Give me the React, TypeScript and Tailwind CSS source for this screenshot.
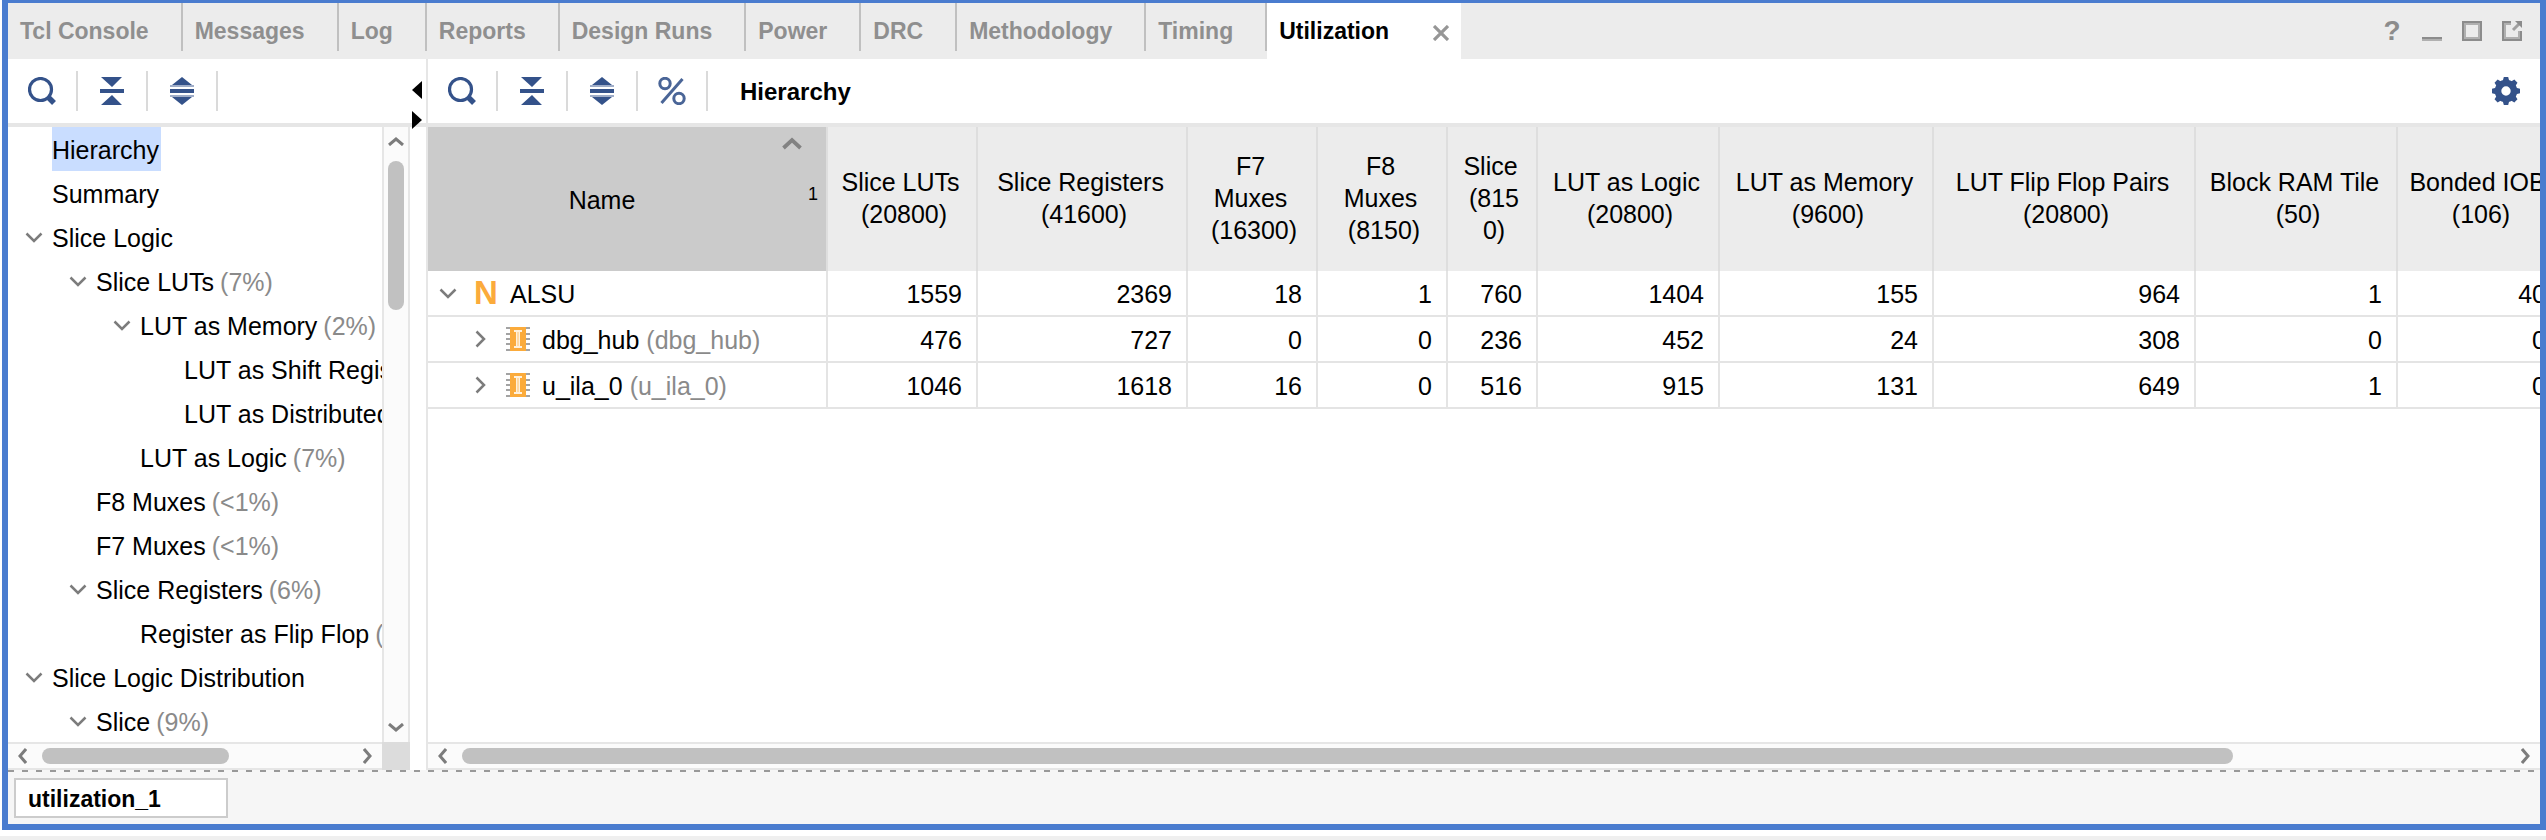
import React from "react";

const tabs = ["Tcl Console", "Messages", "Log", "Reports", "Design Runs", "Power", "DRC", "Methodology", "Timing"];

type TreeItem = { label: string; pct?: string; level: number; open?: boolean; selected?: boolean };

const tree: TreeItem[] = [
  { label: "Hierarchy", level: 0, selected: true },
  { label: "Summary", level: 0 },
  { label: "Slice Logic", level: 0, open: true },
  { label: "Slice LUTs", pct: "(7%)", level: 1, open: true },
  { label: "LUT as Memory", pct: "(2%)", level: 2, open: true },
  { label: "LUT as Shift Register", pct: "(2%)", level: 3 },
  { label: "LUT as Distributed RAM", pct: "(<1%)", level: 3 },
  { label: "LUT as Logic", pct: "(7%)", level: 2 },
  { label: "F8 Muxes", pct: "(<1%)", level: 1 },
  { label: "F7 Muxes", pct: "(<1%)", level: 1 },
  { label: "Slice Registers", pct: "(6%)", level: 1, open: true },
  { label: "Register as Flip Flop", pct: "(6%)", level: 2 },
  { label: "Slice Logic Distribution", level: 0, open: true },
  { label: "Slice", pct: "(9%)", level: 1, open: true },
];

const indents = ["pl-[10px]", "pl-[54px]", "pl-[98px]", "pl-[142px]"];

const columns = [
  { title: "Slice LUTs \n(20800)", width: "w-[150px]" },
  { title: "Slice Registers \n(41600)", width: "w-[210px]" },
  { title: "F7 \nMuxes \n(16300)", width: "w-[130px]" },
  { title: "F8 \nMuxes \n(8150)", width: "w-[130px]" },
  { title: "Slice \n(815\n0)", width: "w-[90px]" },
  { title: "LUT as Logic \n(20800)", width: "w-[182px]" },
  { title: "LUT as Memory \n(9600)", width: "w-[214px]" },
  { title: "LUT Flip Flop Pairs \n(20800)", width: "w-[262px]" },
  { title: "Block RAM Tile \n(50)", width: "w-[202px]" },
  { title: "Bonded IOB \n(106)", width: "w-[164px]" },
];

type Row = { name: string; module?: string; top?: boolean; values: number[] };

const rows: Row[] = [
  { name: "ALSU", top: true, values: [1559, 2369, 18, 1, 760, 1404, 155, 964, 1, 40] },
  { name: "dbg_hub", module: "(dbg_hub)", values: [476, 727, 0, 0, 236, 452, 24, 308, 0, 0] },
  { name: "u_ila_0", module: "(u_ila_0)", values: [1046, 1618, 16, 0, 516, 915, 131, 649, 1, 0] },
];

const chevrons = {
  down: { w: 18, h: 11, d: "M1.5 1.5 L9 9 L16.5 1.5" },
  right: { w: 11, h: 18, d: "M1.5 1.5 L9 9 L1.5 16.5" },
  scrollUp: { w: 16, h: 9, d: "M1 8 L8 2 L15 8" },
  scrollDown: { w: 16, h: 9, d: "M1 1 L8 7 L15 1" },
  scrollLeft: { w: 9, h: 16, d: "M8 1 L2 8 L8 15" },
  scrollRight: { w: 9, h: 16, d: "M1 1 L7 8 L1 15" },
  sort: { w: 20, h: 13, d: "M1.5 11 L10 3 L18.5 11" },
};

function Chevron({ kind, weight = 2.5, color = "#7c7c7c" }: { kind: keyof typeof chevrons; weight?: number; color?: string }) {
  const c = chevrons[kind];
  return (
    <svg width={c.w} height={c.h} viewBox={`0 0 ${c.w} ${c.h}`} fill="none" stroke={color} strokeWidth={weight} aria-hidden="true">
      <path d={c.d} />
    </svg>
  );
}

function SearchIcon() {
  return (
    <svg width="28" height="28" viewBox="0 0 28 28" fill="none" stroke="#34528a" aria-hidden="true">
      <circle cx="12.5" cy="12.5" r="11" strokeWidth="3.2" />
      <path d="M19.5 19.5 L26 26" strokeWidth="5.5" />
    </svg>
  );
}

function CollapseIcon() {
  return (
    <svg width="24" height="28" viewBox="0 0 24 28" fill="#34528a" aria-hidden="true">
      <path d="M1 0 H22 L12 10 Z M0 12 H24 V16 H0 Z M12 18 L22 28 H1 Z" />
    </svg>
  );
}

function ExpandIcon() {
  return (
    <svg width="24" height="28" viewBox="0 0 24 28" fill="#34528a" aria-hidden="true">
      <path d="M12 0 L22 8 H2 Z M0 12 H24 V16 H0 Z M2 20 H22 L12 28 Z" />
      <path d="M0 8 H24 V10 H0 Z M0 18 H24 V20 H0 Z" fill="#9fadc8" />
    </svg>
  );
}

function PercentIcon() {
  return (
    <svg width="28" height="28" viewBox="0 0 28 28" fill="none" stroke="#4a6597" strokeWidth="3" aria-hidden="true">
      <circle cx="7" cy="6.5" r="5.2" />
      <circle cx="21" cy="21.5" r="5.2" />
      <path d="M3.5 26 L24.5 2" />
    </svg>
  );
}

function GearIcon() {
  return (
    <svg width="28" height="28" viewBox="0 0 28 28" aria-hidden="true">
      <circle cx="14" cy="14" r="8" fill="none" stroke="#34528a" strokeWidth="6.6" />
      {[0, 45, 90, 135, 180, 225, 270, 315].map((a) => (
        <path key={a} d="M11.8 0 H16.2 L17.5 5 H10.5 Z" fill="#34528a" transform={`rotate(${a} 14 14)`} />
      ))}
    </svg>
  );
}

function InstanceIcon() {
  return (
    <svg width="24" height="24" viewBox="0 0 24 24" aria-hidden="true">
      <path d="M0 1 H24 M0 7 H24 M0 12 H24 M0 17 H24 M0 23 H24" stroke="#a3a3a3" strokeWidth="2" />
      <rect x="4" width="16" height="24" fill="#fbab3b" />
      <path d="M8 3 H16 V5 H14 V19 H16 V21 H8 V19 H10 V5 H8 Z" fill="#fff1dc" />
      <rect x="11" y="5" width="2" height="14" fill="#fdd9a5" />
    </svg>
  );
}

function ToolButton({ label, children }: { label: string; children: React.ReactNode }) {
  return (
    <div className="flex h-10 w-[70px] shrink-0 border-r-2 border-[#dadada]">
      <button type="button" aria-label={label} className="flex flex-1 items-center justify-center">
        {children}
      </button>
    </div>
  );
}

function HorizontalScroll({ thumb }: { thumb: string }) {
  return (
    <div className="flex h-7 shrink-0 items-center border-y-2 border-[#e6e6e6] bg-[#fbfbfb]">
      <button type="button" aria-label="Scroll left" className="flex h-6 w-[34px] items-center pl-[10px]">
        <Chevron kind="scrollLeft" weight={3} />
      </button>
      <div className="flex-1">
        <div className={`h-4 rounded-full bg-[#c1c1c1] ${thumb}`} />
      </div>
      <button type="button" aria-label="Scroll right" className="flex h-6 w-[34px] items-center justify-end pr-[10px]">
        <Chevron kind="scrollRight" weight={3} />
      </button>
    </div>
  );
}

function TabBar() {
  return (
    <div className="flex h-14 shrink-0 items-start bg-[#ececec] text-[23px] leading-6 font-bold">
      <div role="tablist" className="flex">
        {tabs.map((t) => (
          <button
            key={t}
            type="button"
            role="tab"
            aria-selected="false"
            className="flex h-12 items-start border-r-2 border-[#c0c0c0] pt-4 pr-8 pl-3 whitespace-nowrap text-[#8f8f8f]"
          >
            {t}
          </button>
        ))}
        <div className="flex h-14 w-[194px] items-start justify-between bg-white pt-4 pr-3 pl-3">
          <button type="button" role="tab" aria-selected="true" className="text-black">
            Utilization
          </button>
          <button type="button" aria-label="Close Utilization" className="mt-1.5">
            <svg width="16" height="16" viewBox="0 0 16 16" stroke="#969696" strokeWidth="3.2" aria-hidden="true">
              <path d="M1 1 L15 15 M15 1 L1 15" />
            </svg>
          </button>
        </div>
      </div>
      <div className="ml-auto flex h-14 gap-5 pt-[18px] pr-[18px]">
        <button type="button" aria-label="Help" className="h-5 w-5 text-center text-[28px] leading-5 text-[#8c8c8c]">
          ?
        </button>
        <button type="button" aria-label="Minimize" className="flex h-5 w-5 items-end">
          <span className="h-1 w-5 border-t-2 border-[#8c8c8c] bg-[#b0b0b0]" />
        </button>
        <button type="button" aria-label="Maximize" className="h-5 w-5">
          <svg width="20" height="20" viewBox="0 0 20 20" fill="none" aria-hidden="true">
            <rect x="3" y="3" width="14" height="14" stroke="#b0b0b0" strokeWidth="2" />
            <rect x="1" y="1" width="18" height="18" stroke="#8c8c8c" strokeWidth="2" />
          </svg>
        </button>
        <button type="button" aria-label="Float" className="h-5 w-5">
          <svg width="20" height="20" viewBox="0 0 20 20" fill="none" aria-hidden="true">
            <path d="M9 3 H3 V17 H17 V10" stroke="#b0b0b0" strokeWidth="2" />
            <path d="M9 1 H1 V19 H19 V10" stroke="#8c8c8c" strokeWidth="2" />
            <path d="M11 9 L17 3" stroke="#a0a0a0" strokeWidth="3" />
            <path d="M13 0 H20 V7 Z" fill="#8c8c8c" />
          </svg>
        </button>
      </div>
    </div>
  );
}

function Sidebar() {
  return (
    <aside className="relative flex w-[420px] shrink-0 flex-col border-r-2 border-[#e6e6e6] bg-white">
      <div className="flex h-17 shrink-0 items-center border-b-4 border-[#e6e6e6]">
        <ToolButton label="Search">
          <SearchIcon />
        </ToolButton>
        <ToolButton label="Collapse all">
          <CollapseIcon />
        </ToolButton>
        <ToolButton label="Expand all">
          <ExpandIcon />
        </ToolButton>
      </div>
      <div className="mr-4 flex min-h-0 flex-1">
        <div className="flex min-w-0 flex-1 flex-col">
          <ul role="tree" aria-label="Reports" className="min-h-0 flex-1 overflow-hidden">
            {tree.map((item) => (
              <li
                key={item.label}
                role="treeitem"
                aria-selected={!!item.selected}
                className={`flex h-11 items-center whitespace-nowrap ${indents[item.level]}`}
              >
                <span className="flex w-[34px] shrink-0 pl-[7px]">
                  {item.open && (
                    <button type="button" aria-label={`Collapse ${item.label}`}>
                      <Chevron kind="down" />
                    </button>
                  )}
                </span>
                <span className={item.selected ? "flex h-11 items-center bg-[#c9ddff] pt-0.5 pr-0.5" : "flex h-11 items-center pt-0.5"}>
                  {item.label}
                  {item.pct && <span className="pl-1.5 text-[#8a8a8a]">{item.pct}</span>}
                </span>
              </li>
            ))}
          </ul>
          <HorizontalScroll thumb="w-[61%]" />
        </div>
        <div className="flex w-7 shrink-0 flex-col">
          <div className="flex min-h-0 flex-1 flex-col items-center border-x-2 border-[#e6e6e6] bg-[#fbfbfb]">
            <button type="button" aria-label="Scroll up" className="flex h-[34px] w-4 items-start pt-[10px]">
              <Chevron kind="scrollUp" weight={3} />
            </button>
            <div className="min-h-0 w-full flex-1 px-1">
              <div className="h-3/11 rounded-full bg-[#c1c1c1]" />
            </div>
            <button type="button" aria-label="Scroll down" className="flex h-[34px] w-4 items-end pb-[10px]">
              <Chevron kind="scrollDown" weight={3} />
            </button>
          </div>
          <div className="h-7 shrink-0 bg-[#dcdcdc]" />
        </div>
      </div>
      <div className="absolute top-[22px] right-1 flex flex-col gap-3">
        <button type="button" aria-label="Hide navigation">
          <svg width="10" height="18" viewBox="0 0 10 18" aria-hidden="true">
            <path d="M10 0 V18 L0 9 Z" />
          </svg>
        </button>
        <button type="button" aria-label="Show navigation">
          <svg width="10" height="18" viewBox="0 0 10 18" aria-hidden="true">
            <path d="M0 0 V18 L10 9 Z" />
          </svg>
        </button>
      </div>
    </aside>
  );
}

function UtilizationTable() {
  return (
    <table className="w-[2134px] table-fixed border-separate border-spacing-0">
      <thead>
        <tr className="h-36 bg-[#ececec]">
          <th scope="col" aria-sort="ascending" className="relative w-[400px] border-r-2 border-[#dedede] bg-[#cbcbcb] p-0 pt-0.5 pr-[50px] font-normal">
            Name
            <span className="absolute top-[10px] right-6">
              <Chevron kind="sort" weight={3.8} color="#828282" />
            </span>
            <span className="absolute top-[57px] right-2 text-[18px] leading-5">1</span>
          </th>
          {columns.map((c) => (
            <th key={c.title} scope="col" className={`border-r-2 border-[#dedede] p-0 pb-0.5 pl-1 leading-8 font-normal whitespace-pre ${c.width}`}>
              {c.title}
            </th>
          ))}
        </tr>
      </thead>
      <tbody>
        {rows.map((r) => (
          <tr key={r.name} className="h-[46px]">
            <th scope="row" className="border-r-2 border-b-2 border-[#e4e4e4] p-0 font-normal">
              {r.top ? (
                <div className="flex items-center pl-[11px]">
                  <button type="button" aria-label="Collapse ALSU" className="w-[35px]">
                    <Chevron kind="down" />
                  </button>
                  <span aria-hidden="true" className="w-9 text-left text-[33px] leading-8 font-bold text-[#fbab3b]">
                    N
                  </span>
                  <span className="pt-0.5">{r.name}</span>
                </div>
              ) : (
                <div className="flex items-center pl-[47px]">
                  <button type="button" aria-label={`Expand ${r.name}`} className="w-[31px]">
                    <Chevron kind="right" />
                  </button>
                  <InstanceIcon />
                  <span className="pt-0.5 pl-3">{r.name}</span>
                  <span className="pt-0.5 pl-[7px] text-[#8a8a8a]">{r.module}</span>
                </div>
              )}
            </th>
            {r.values.map((v, i) => (
              <td key={i} className="border-r-2 border-b-2 border-[#e4e4e4] p-0 pt-0.5 pr-[14px] text-right">
                {v}
              </td>
            ))}
          </tr>
        ))}
      </tbody>
    </table>
  );
}

export default function App() {
  return (
    <div className="flex h-screen flex-col bg-white font-['Liberation_Sans',Arial,sans-serif] text-[25px] leading-8 text-black">
      <div className="ml-0.5 flex min-h-0 flex-1 flex-col border-6 border-t-3 border-[#4a7ccf]">
        <TabBar />
        <div className="flex min-h-0 flex-1">
          <Sidebar />
          <main className="flex min-w-0 flex-1 flex-col">
            <div className="flex h-17 shrink-0 items-center border-b-4 border-[#e6e6e6]">
              <ToolButton label="Search">
                <SearchIcon />
              </ToolButton>
              <ToolButton label="Collapse all">
                <CollapseIcon />
              </ToolButton>
              <ToolButton label="Expand all">
                <ExpandIcon />
              </ToolButton>
              <ToolButton label="Show percentage">
                <PercentIcon />
              </ToolButton>
              <h1 className="pt-0.5 pl-8 text-[24px] font-bold">Hierarchy</h1>
              <button type="button" aria-label="Settings" className="mr-5 ml-auto">
                <GearIcon />
              </button>
            </div>
            <div className="min-h-0 flex-1 overflow-hidden">
              <UtilizationTable />
            </div>
            <HorizontalScroll thumb="w-13/15" />
          </main>
        </div>
        <div className="shrink-0 bg-[#f6f6f6]">
          <div className="h-0.5 bg-[repeating-linear-gradient(90deg,#999_0_6px,transparent_6px_14px)]" />
          <div className="flex h-13 items-start px-1.5 pt-1.5">
            <button type="button" className="flex h-10 w-[214px] items-center border-2 border-[#cccccc] bg-white pt-0.5 pl-3 text-[23px] font-bold">
              utilization_1
            </button>
          </div>
        </div>
      </div>
      <div className="mt-1.5 h-1 shrink-0 bg-[#efefef]" />
    </div>
  );
}
